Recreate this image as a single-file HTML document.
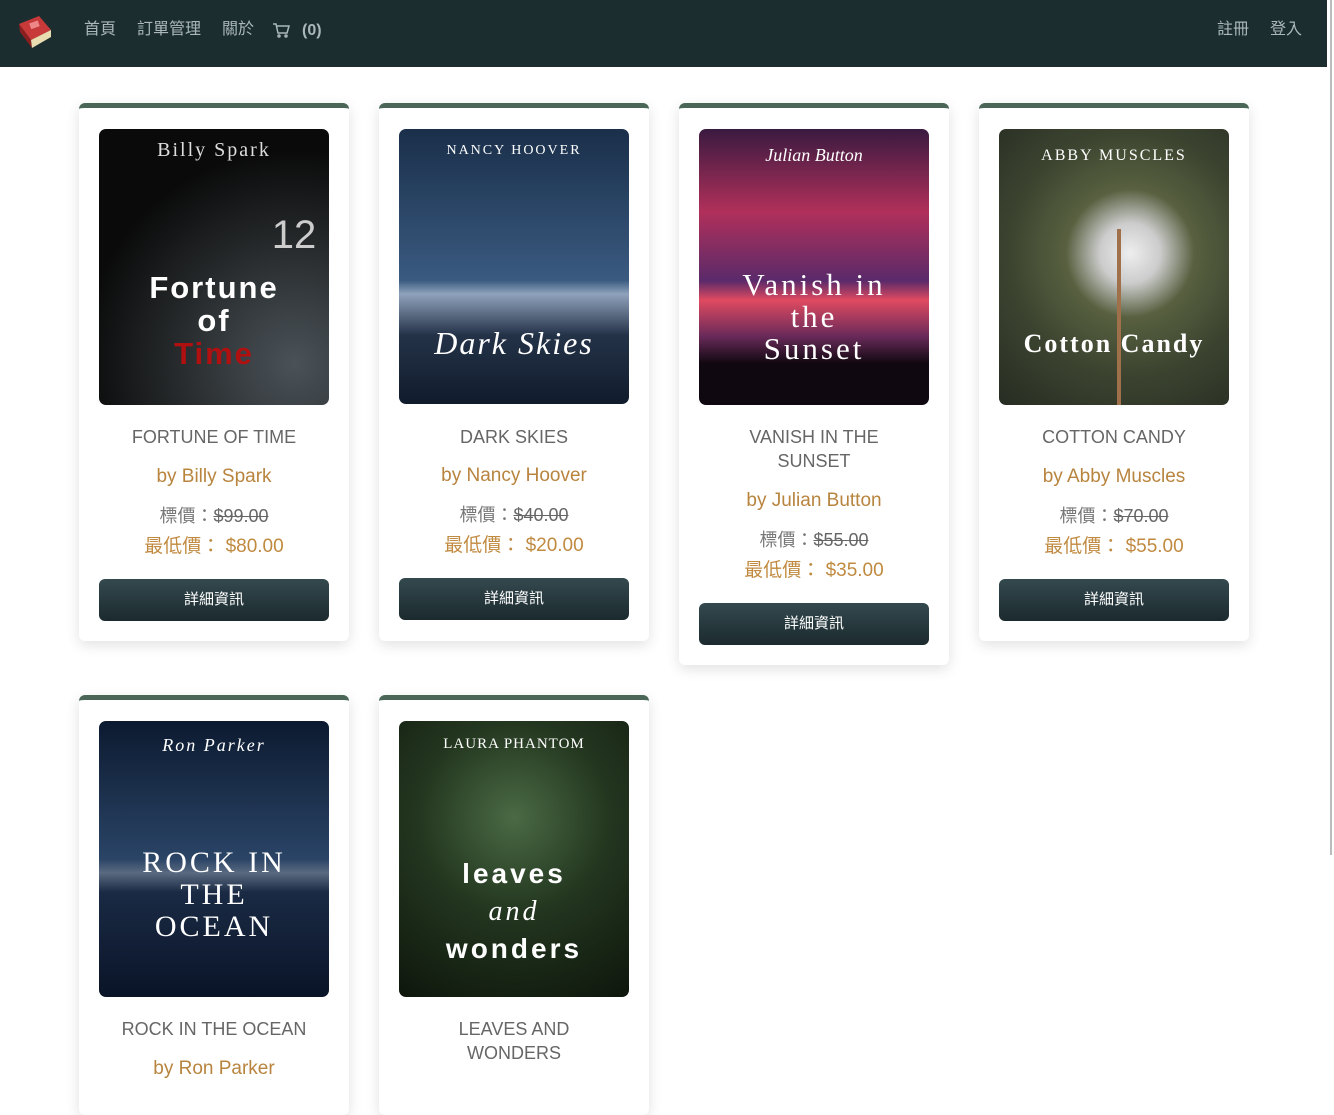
<!DOCTYPE html>
<html><head><meta charset="utf-8"><style>
*{margin:0;padding:0;box-sizing:border-box}
body{width:1334px;height:1063px;overflow:hidden;background:#fff;font-family:"Liberation Sans","Noto Sans CJK TC",sans-serif;position:relative}
.nav{position:absolute;left:0;top:0;width:1327px;height:67px;background:#1c2d30}
.nav a{position:absolute;top:20px;line-height:20px;color:#aab8bb;font-size:16px;text-decoration:none}
.sb{position:absolute;left:1330px;top:0;width:2px;height:855px;background:#bbb}
.card{position:absolute;width:270px;background:#fff;border-top:5px solid #4a6656;border-radius:6px;box-shadow:0 4px 14px rgba(0,0,0,.12);text-align:center}
.cov{position:absolute;left:20px;top:21px;width:230px;height:276px;border-radius:7px;overflow:hidden;color:#fff}
.cov div{position:absolute;left:0;width:100%;text-align:center}
.t{position:absolute;left:10px;width:250px;top:317px;font-size:18px;color:#666;line-height:24px}
.au{font-size:19px;color:#b8843e;position:absolute;left:0;width:100%;line-height:24px}
.p1{font-size:18px;color:#777;position:absolute;left:0;width:100%;line-height:24px}
.p1 s{color:#666}
.p2{font-size:19px;color:#c08a40;position:absolute;left:0;width:100%;line-height:24px}
.btn{position:absolute;left:20px;width:230px;height:42px;border-radius:6px;background:linear-gradient(#34494e,#1b2a2e);color:#fff;font-size:15px;line-height:42px}
</style></head><body>
<div class="nav">
<svg style="position:absolute;left:15px;top:12px" width="40" height="40" viewBox="0 0 40 40"><path d="M4 12 L24 4 L36 18 L16 28Z" fill="#c83a3a"/><path d="M4 12 L16 28 L17 36 L5 20Z" fill="#8b1e1e"/><path d="M16 28 L36 18 L36 25 L17 36Z" fill="#e8dcb0"/><rect x="15" y="10" width="9" height="6" fill="#e88" transform="rotate(-20 19 13)"/></svg>
<a style="left:84px">首頁</a><a style="left:137px">訂單管理</a><a style="left:222px">關於</a>
<svg style="position:absolute;left:273px;top:23px" width="17" height="15" viewBox="0 0 17 15" fill="none" stroke="#aab8bb" stroke-width="1.5"><path d="M0 1h3l2 9h9l2-7H4"/><circle cx="6" cy="13" r="1"/><circle cx="13" cy="13" r="1"/></svg>
<a style="left:302px;font-weight:bold;top:21px">(0)</a>
<a style="left:1217px">註冊</a><a style="left:1270px">登入</a>
</div>
<div class="sb"></div>

<div class="card" style="left:79px;top:103px;height:538px">
<div class="cov" style="background:radial-gradient(circle at 85% 85%,#4a5258 0,#2a2e30 35%,#0a0a0a 70%)">
<div style="top:10px;font-family:'Liberation Serif';font-size:20px;letter-spacing:2px;color:#ddd">Billy Spark</div>
<div style="top:84px;left:160px;width:70px;font-size:40px;color:#ccc">12</div>
<div style="top:142px;font-size:31px;font-weight:bold;letter-spacing:2px;line-height:33px">Fortune<br>of<br><span style="color:#b01010">Time</span></div></div>
<div class="t">FORTUNE OF TIME</div>
<div class="au" style="top:357px">by Billy Spark</div>
<div class="p1" style="top:396px">標價：<s>$99.00</s></div>
<div class="p2" style="top:427px">最低價： $80.00</div>
<div class="btn" style="top:471px">詳細資訊</div></div>

<div class="card" style="left:379px;top:103px;height:538px">
<div class="cov" style="height:275px;background:linear-gradient(#1a2f4a,#3a5a80 55%,#8fa2bb 60%,#243248 75%,#101c2c)">
<div style="top:14px;font-family:'Liberation Serif';font-size:14px;letter-spacing:2px">NANCY HOOVER</div>
<div style="top:196px;font-family:'Liberation Serif';font-style:italic;font-size:32px;letter-spacing:2px">Dark Skies</div></div>
<div class="t">DARK SKIES</div>
<div class="au" style="top:356px">by Nancy Hoover</div>
<div class="p1" style="top:395px">標價：<s>$40.00</s></div>
<div class="p2" style="top:426px">最低價： $20.00</div>
<div class="btn" style="top:470px">詳細資訊</div></div>

<div class="card" style="left:679px;top:103px;height:562px">
<div class="cov" style="background:linear-gradient(#3a1a40,#b0305a 30%,#5a2a6a 55%,#e04a60 62%,#6a2a5a 75%,#100810 85%)">
<div style="top:16px;font-family:'Liberation Serif';font-style:italic;font-size:18px">Julian Button</div>
<div style="top:140px;font-family:'Liberation Serif';font-size:31px;letter-spacing:3px;line-height:32px">Vanish in<br>the<br>Sunset</div></div>
<div class="t">VANISH IN THE<br>SUNSET</div>
<div class="au" style="top:381px">by Julian Button</div>
<div class="p1" style="top:420px">標價：<s>$55.00</s></div>
<div class="p2" style="top:451px">最低價： $35.00</div>
<div class="btn" style="top:495px">詳細資訊</div></div>

<div class="card" style="left:979px;top:103px;height:538px">
<div class="cov" style="background:radial-gradient(circle at 57% 45%,#eee 0,#ccc 15%,#586040 32%,#3c4430 60%,#262c22)">
<div style="top:18px;font-family:'Liberation Serif';font-size:16px;letter-spacing:2px">ABBY MUSCLES</div>
<div style="top:100px;left:118px;width:4px;height:176px;background:#a0704a"></div>
<div style="top:200px;font-family:'Liberation Serif';font-weight:bold;font-size:26px;letter-spacing:2px">Cotton Candy</div></div>
<div class="t">COTTON CANDY</div>
<div class="au" style="top:357px">by Abby Muscles</div>
<div class="p1" style="top:396px">標價：<s>$70.00</s></div>
<div class="p2" style="top:427px">最低價： $55.00</div>
<div class="btn" style="top:471px">詳細資訊</div></div>

<div class="card" style="left:79px;top:695px;height:420px">
<div class="cov" style="background:linear-gradient(#0c1a30,#2a4466 50%,#5a6a80 55%,#1a2a44 62%,#0a1428)">
<div style="top:14px;font-family:'Liberation Serif';font-style:italic;font-size:18px;letter-spacing:2px">Ron Parker</div>
<div style="top:126px;font-family:'Liberation Serif';font-size:30px;letter-spacing:3px;line-height:32px">ROCK IN<br>THE<br>OCEAN</div></div>
<div class="t">ROCK IN THE OCEAN</div>
<div class="au" style="top:357px">by Ron Parker</div></div>

<div class="card" style="left:379px;top:695px;height:420px">
<div class="cov" style="background:radial-gradient(circle at 50% 35%,#4a6a44,#23361f 45%,#0e160c)">
<div style="top:15px;font-family:'Liberation Serif';font-size:15px;letter-spacing:1px">LAURA PHANTOM</div>
<div style="top:134px;font-weight:bold;font-size:28px;letter-spacing:3px;line-height:37px">leaves<br><i style="font-family:'Liberation Serif';font-weight:normal">and</i><br>wonders</div></div>
<div class="t">LEAVES AND<br>WONDERS</div></div>
</body></html>
